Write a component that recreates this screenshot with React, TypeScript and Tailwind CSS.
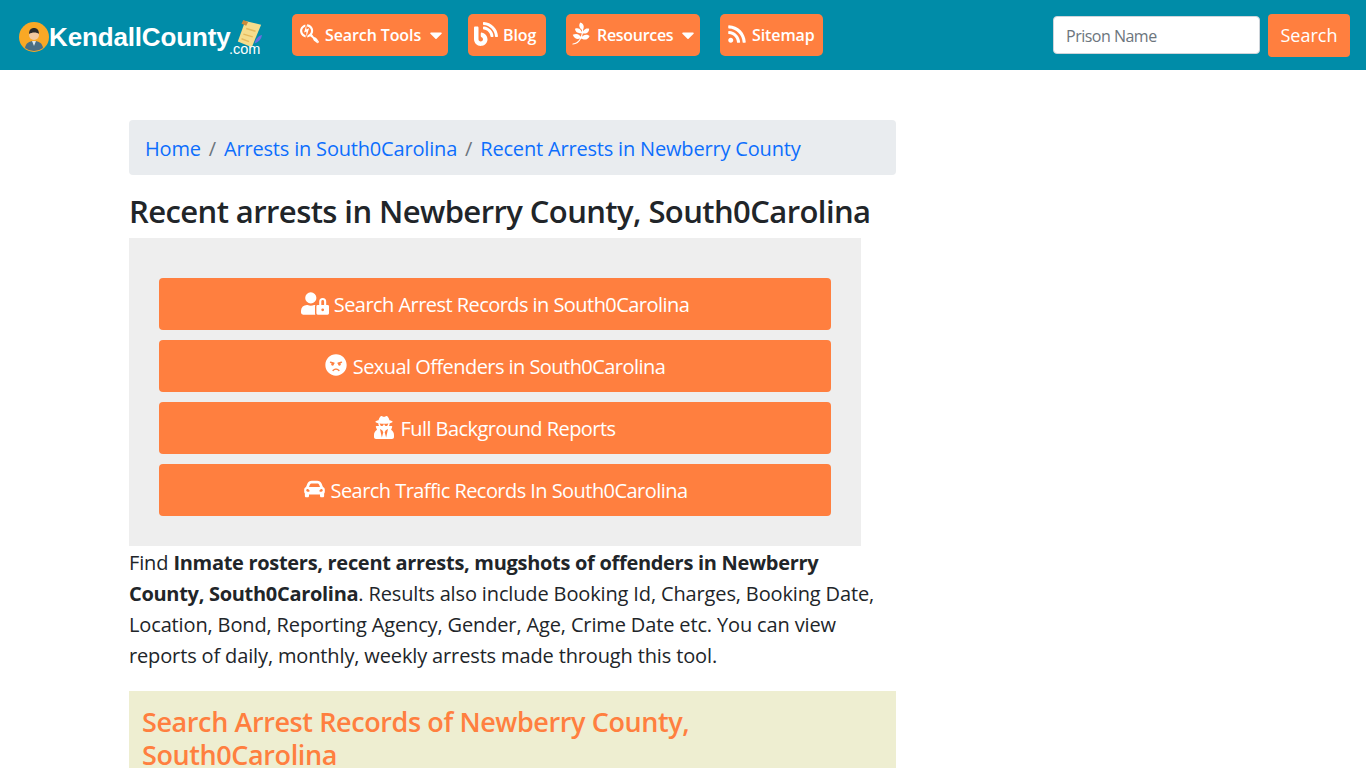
import { FaSearchengin, FaBlog, FaPagelines, FaRss, FaUserLock, FaAngry, FaUserSecret, FaCarAlt, FaCaretDown } from "react-icons/fa";

const font = "[font-family:'Open_Sans',sans-serif]";

function Logo() {
  return (
    <div className="flex items-center w-[242px] h-[40px] relative pl-[1px]">
      <svg width="30" height="30" viewBox="0 0 30 30" className="shrink-0 mt-[3px]">
        <circle cx="15" cy="15" r="15" fill="#f9a825" />
        <path d="M6 26c1-5 4-7 9-7s8 2 9 7a15 15 0 0 1-18 0z" fill="#4a6f85" />
        <path d="M13 19h4l-2 5z" fill="#dfe7ea" />
        <circle cx="15" cy="13" r="5" fill="#f0c8a0" />
        <path d="M10 12c0-4 2-6 5-6s5 2 5 6c-2-2-7-2-10 0z" fill="#2b2b2b" />
      </svg>
      <span className="text-white font-bold text-[26px] leading-none mt-[3px] tracking-[-0.15px] [font-family:'Liberation_Sans',sans-serif]">KendallCounty</span>
      <svg width="28" height="32" viewBox="0 0 30 34" className="absolute left-[217px] top-[4px]">
        <path d="M11 2l17 4-10 24-15-6z" fill="#f6dc8c" />
        <path d="M9 1l5 2-2 4-5-2z" fill="#c98b3c" />
        <path d="M12 10l10 3M9 16l10 3M7 21l8 3" stroke="#e5b95c" strokeWidth="1.5" />
        <path d="M29 17c-3 0-7 4-8 9 4-1 7-4 8-9z" fill="#6a6fe0" />
      </svg>
      <span className="absolute left-[211px] top-[27px] text-white text-[14.5px] leading-none [font-family:'Liberation_Sans',sans-serif]">.com</span>
    </div>
  );
}

function NavButton({ icon, label, caret, className }: { icon: React.ReactNode; label: string; caret?: boolean; className: string }) {
  return (
    <a className={`flex items-center h-[42px] rounded-[5px] bg-[#ff7f3f] text-white text-[16px] font-semibold ${className}`}>
      <span className="-mt-[3px]">{icon}</span>
      <span className="ml-[5px] tracking-[-0.1px]">{label}</span>
      {caret && <FaCaretDown className="w-[20px] h-[20px] ml-[5px]" />}
    </a>
  );
}

function ActionButton({ icon, label }: { icon: React.ReactNode; label: string }) {
  return (
    <a className="flex items-center justify-center gap-[5px] h-[52px] rounded-[4px] bg-[#ff7f3f] text-white text-[20px] tracking-[-0.55px]">
      <span className="-mt-[2px]">{icon}</span>
      <span className="pt-[2px]">{label}</span>
    </a>
  );
}

export default function App() {
  return (
    <div className={`min-h-screen h-[768px] overflow-hidden bg-white text-[#212529] ${font}`}>
      <nav className="flex items-center h-[70px] bg-[#008ca8] pl-[18px] pr-[16px]">
        <Logo />
        <div className="flex items-center gap-[20px] ml-[32px]">
          <NavButton icon={<FaSearchengin className="w-[21px] h-[21px]" />} label="Search Tools" caret className="w-[156px] pl-[7px]" />
          <NavButton icon={<FaBlog className="w-[24px] h-[24px]" />} label="Blog" className="w-[78px] pl-[6px]" />
          <NavButton icon={<FaPagelines className="w-[22px] h-[23px]" />} label="Resources" caret className="w-[134px] pl-[4px] [&>span:nth-child(2)]:tracking-[-0.3px]" />
          <NavButton icon={<FaRss className="w-[20px] h-[20px]" />} label="Sitemap" className="w-[103px] pl-[7px]" />
        </div>
        <div className="flex items-center gap-[8px] ml-auto">
          <div className="flex items-center w-[207px] h-[38px] bg-white border border-[#ced4da] rounded-[4px] px-[12px] pt-[2px] text-[16px] tracking-[-0.5px] text-[#6c757d]">Prison Name</div>
          <button className="h-[43px] w-[82px] rounded-[4px] bg-[#ff7f3f] text-white text-[18px]">Search</button>
        </div>
      </nav>

      <main className="w-[767px] ml-[129px] pt-[50px]">
        <ol className="flex items-center h-[55px] bg-[#e9ecef] rounded-[4px] px-[16px] pt-[2px] text-[20px] tracking-[-0.18px] text-[#0d6efd]">
          <li>Home</li>
          <li className="px-[8px] text-[#6c757d]">/</li>
          <li>Arrests in South0Carolina</li>
          <li className="px-[8px] text-[#6c757d]">/</li>
          <li>Recent Arrests in Newberry County</li>
        </ol>

        <h1 className="mt-[16px] text-[31px] leading-[40px] font-semibold tracking-[-0.58px]">Recent arrests in Newberry County, South0Carolina</h1>

        <div className="mt-[7px] w-[732px] h-[308px] bg-[#eeeeee] px-[30px] pt-[40px] flex flex-col gap-[10px]">
          <ActionButton icon={<FaUserLock className="w-[28px] h-[23px]" />} label="Search Arrest Records in South0Carolina" />
          <ActionButton icon={<FaAngry className="w-[22px] h-[22px] mr-[1px]" />} label="Sexual Offenders in South0Carolina" />
          <ActionButton icon={<FaUserSecret className="w-[20px] h-[23px] mr-[1px]" />} label="Full Background Reports" />
          <ActionButton icon={<FaCarAlt className="w-[23px] h-[22px]" />} label="Search Traffic Records In South0Carolina" />
        </div>

        <p className="mt-[1px] text-[20px] leading-[31px] tracking-[-0.14px]">
          Find <b className="font-bold tracking-[-0.3px]">Inmate rosters, recent arrests, mugshots of offenders in Newberry<br />County, South0Carolina</b>. Results also include Booking Id, Charges, Booking Date, Location, Bond, Reporting Agency, Gender, Age, Crime Date etc. You can view reports of daily, monthly, weekly arrests made through this tool.
        </p>

        <div className="mt-[20px] bg-[#eeeed1] px-[13px] pt-[14px] pb-[20px]">
          <h2 className="text-[27px] leading-[33px] font-semibold text-[#ff7f3f] tracking-[-0.4px] w-[600px]">Search Arrest Records of Newberry County, South0Carolina</h2>
        </div>
      </main>
    </div>
  );
}
